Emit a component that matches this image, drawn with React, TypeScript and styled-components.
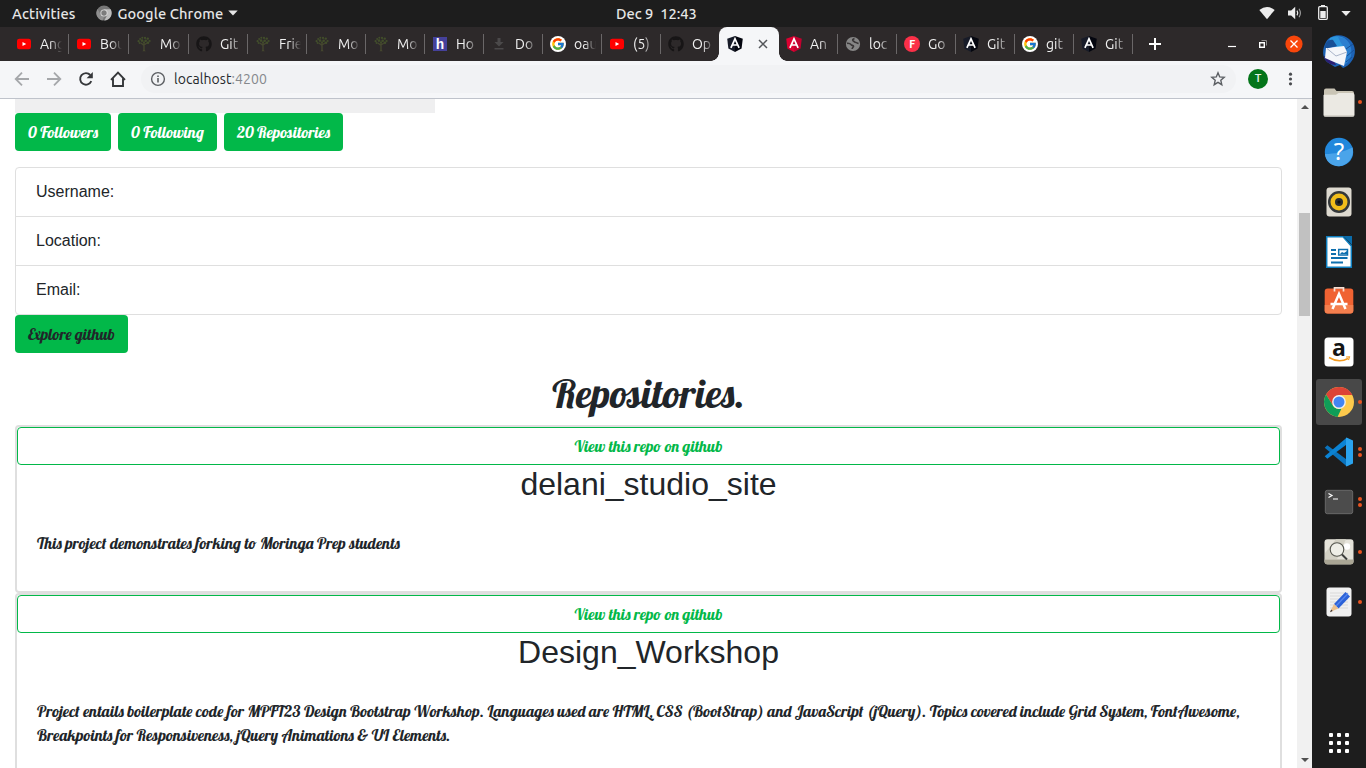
import React from "react";
import styled, { createGlobalStyle } from "styled-components";
import { FcGoogle } from "react-icons/fc";
import { FaGithub } from "react-icons/fa";

const GlobalStyle = createGlobalStyle`
  *, *::before, *::after { box-sizing: border-box; }
  html, body { margin: 0; padding: 0; overflow: hidden; background: #fff; }
  svg { display: block; flex: none; }
`;

const uiFont = `Ubuntu, "Noto Sans", "Open Sans", sans-serif`;
const bodyFont = `"Liberation Sans", Arial, sans-serif`;
const scriptFont = `Lobster, "Liberation Serif", serif`;

const Desktop = styled.div`
  width: 1366px;
  height: 768px;
  display: flex;
  flex-direction: column;
  overflow: hidden;
  font-family: ${uiFont};
`;

/* ---------- Top panel ---------- */

const Panel = styled.header`
  height: 27px;
  flex: none;
  background: #1d1d1d;
  color: #e6e6e6;
  display: grid;
  grid-template-columns: 604px auto 1fr;
  align-items: center;
  font-size: 14.67px;
  font-weight: 500;
  line-height: 25px;
  padding: 0 15px 1px 12px;
`;

const PanelGroup = styled.div`
  display: flex;
  align-items: center;
`;

const PanelStatus = styled(PanelGroup)`
  justify-content: flex-end;
`;

const PanelLabel = styled.span<{ $track?: number; $left?: number }>`
  white-space: pre;
  letter-spacing: ${(p) => p.$track ?? 0}px;
  margin-left: ${(p) => p.$left ?? 0}px;
`;

const Workspace = styled.div`
  flex: 1;
  min-height: 0;
  display: flex;
`;

const BrowserWindow = styled.div`
  width: 1312px;
  display: flex;
  flex-direction: column;
`;

/* ---------- Tabs ---------- */

const TabStrip = styled.div`
  height: 34px;
  flex: none;
  background: #2d292a;
  display: flex;
  align-items: center;
  padding-left: 9px;
`;

const Tab = styled.div<{ $line: boolean; $width: number }>`
  width: ${(p) => p.$width}px;
  height: 20px;
  flex: none;
  display: flex;
  align-items: center;
  padding-left: 7px;
  border-right: 1px solid ${(p) => (p.$line ? "#6a6768" : "transparent")};
`;

const TabTitle = styled.span`
  width: 22px;
  margin-left: 8px;
  overflow: hidden;
  white-space: nowrap;
  font-size: 14px;
  line-height: 20px;
  color: #f1f1f1;
  mask-image: linear-gradient(to right, #000 45%, transparent 100%);
`;

const ActiveTab = styled.div`
  position: relative;
  width: 60px;
  height: 34px;
  flex: none;
  display: flex;
  align-items: center;
  gap: 14px;
  padding-left: 8px;
  background: #f5f6f8;
  border-radius: 8px 8px 0 0;
  &::before,
  &::after {
    content: "";
    position: absolute;
    bottom: 0;
    width: 8px;
    height: 8px;
  }
  &::before {
    left: -8px;
    background: radial-gradient(circle at 0 0, transparent 7.5px, #f5f6f8 8px);
  }
  &::after {
    right: -8px;
    background: radial-gradient(circle at 100% 0, transparent 7.5px, #f5f6f8 8px);
  }
`;

const NewTab = styled.div`
  margin-left: 16px;
`;

const WindowControls = styled.div`
  margin-left: auto;
  margin-right: 9px;
  display: flex;
  align-items: center;
`;

/* ---------- Toolbar ---------- */

const Toolbar = styled.div`
  height: 38px;
  flex: none;
  display: flex;
  align-items: center;
  background: #f5f6f8;
  border-bottom: 1px solid #bfc3cb;
  padding: 0 0 1px 14px;
`;

const NavButtons = styled.div`
  display: flex;
  gap: 16px;
`;

const AddressBar = styled.div`
  width: 1095px;
  height: 28px;
  margin-left: 15px;
  padding: 0 10px 0 9px;
  border-radius: 14px;
  background: #f1f2f4;
  display: flex;
  align-items: center;
`;

const Url = styled.span`
  flex: 1;
  margin-left: 8px;
  font-size: 14px;
  line-height: 20px;
  color: #26282b;
  letter-spacing: 0.06px;
`;

const UrlPort = styled.span`
  color: #85888c;
`;

const Avatar = styled.div`
  width: 20px;
  height: 20px;
  margin-left: 12px;
  border-radius: 50%;
  background: #04751a;
  color: #e5f1e7;
  font: 500 11px/20px Roboto, sans-serif;
  text-align: center;
`;

/* ---------- Page ---------- */

const Viewport = styled.div`
  flex: 1;
  min-height: 0;
  display: flex;
  background: #fff;
`;

const Page = styled.main`
  flex: 1;
  overflow: hidden;
  padding: 0 15px;
  font: 16px/24px ${bodyFont};
  color: #212529;
`;

const ProfileImage = styled.div`
  width: 420px;
  height: 14px;
  background: #efeff0;
`;

const Script = styled.span<{ $size?: number }>`
  display: block;
  font-family: ${scriptFont};
  font-weight: 400;
  font-size: ${(p) => p.$size ?? 16}px;
`;

const StatRow = styled.div`
  display: flex;
  gap: 7px;
`;

const Button = styled.div<{ $width: number; $dark?: boolean }>`
  width: ${(p) => p.$width}px;
  height: 38px;
  display: flex;
  align-items: center;
  justify-content: center;
  border-radius: 4px;
  background: #02b849;
  color: ${(p) => (p.$dark ? "#212529" : "#fff")};
`;

const InfoList = styled.ul`
  list-style: none;
  margin: 16px 0 0;
  padding: 0;
  border: 1px solid #dfdfdf;
  border-radius: 4px;
`;

const InfoItem = styled.li`
  height: 49px;
  padding: 12px 20px;
  &:not(:last-child) {
    border-bottom: 1px solid #dfdfdf;
  }
  &:last-child {
    height: 48px;
  }
`;

const SectionTitle = styled.h1`
  margin: 16px 0 8px;
  height: 48px;
  line-height: 48px;
  text-align: center;
`;

const RepoCard = styled.section`
  border: 2px solid #dfdfdf;
  border-radius: 4px;
`;

const RepoLink = styled.div`
  height: 38px;
  display: flex;
  align-items: center;
  justify-content: center;
  border: 1px solid #02b849;
  border-radius: 4px;
  color: #02b849;
`;

const RepoName = styled.h2`
  margin: 0 0 8px;
  font-size: 32px;
  font-weight: 400;
  line-height: 38px;
  text-align: center;
`;

const RepoText = styled.p`
  margin: 0;
  padding: 20px 20px 36px;
`;

/* ---------- Scrollbar ---------- */

const Scrollbar = styled.div`
  width: 15px;
  background: #f1f1f1;
  display: flex;
  flex-direction: column;
  align-items: center;
  justify-content: space-between;
  padding: 6px 0;
`;

const Thumb = styled.div`
  width: 11px;
  height: 103px;
  margin-top: 104px;
  margin-bottom: auto;
  background: #c1c1c1;
`;

/* ---------- Dock ---------- */

const Dock = styled.aside`
  flex: 1;
  background: #1d1d1d;
  display: flex;
  flex-direction: column;
  align-items: center;
  gap: 4px;
  padding: 2px 0;
`;

const DockItem = styled.div<{ $active?: boolean }>`
  position: relative;
  width: 46px;
  height: 46px;
  border-radius: 3px;
  background: ${(p) => (p.$active ? "#484848" : "transparent")};
`;

const RunningDots = styled.div`
  position: absolute;
  right: 0;
  top: 0;
  height: 46px;
  display: flex;
  flex-direction: column;
  justify-content: center;
  gap: 2px;
`;

const Dot = styled.i`
  width: 4px;
  height: 4px;
  border-radius: 50%;
  background: #e95420;
`;

const AppGrid = styled.div`
  margin-top: auto;
  margin-bottom: 13px;
  display: grid;
  grid-template-columns: repeat(3, 4px);
  gap: 4px;
`;

const GridDot = styled.i`
  width: 4px;
  height: 4px;
  border-radius: 1px;
  background: #fff;
`;

/* ---------- Favicons ---------- */

const YouTube = () => (
  <svg width="16" height="16">
    <rect x="1" y="2.7" width="14" height="10.6" rx="2.4" fill="#f00" />
    <path d="M6.5 5.9 10.2 8 6.5 10.1Z" fill="#fff" />
  </svg>
);

const Tree = () => (
  <svg width="16" height="16">
    <path d="M8 15V6M8 9.500 5 7M8 9 11 7" stroke="#45472f" strokeWidth="1.400" fill="none" />
    <path d="M6.300 15.300h3.600L8 13.500Z" fill="#45472f" />
    <g fill="#424e2b">
      <circle cx="2.600" cy="5.200" r="1.100" />
      <circle cx="4.200" cy="3" r="1" />
      <circle cx="6.300" cy="1.700" r="1" />
      <circle cx="9" cy="1.900" r="1.100" />
      <circle cx="11.800" cy="2.600" r="1.200" />
      <circle cx="13.600" cy="5" r="1.100" />
      <circle cx="3.700" cy="7" r="1.100" />
      <circle cx="12" cy="6.700" r="1.300" />
      <circle cx="6" cy="4.600" r="1.300" />
      <circle cx="9.700" cy="4.700" r="1.300" />
      <circle cx="8" cy="6.300" r="1" />
    </g>
  </svg>
);

const GitHub = () => <FaGithub size={16} color="#171516" />;

const Hash = () => (
  <svg width="16" height="16">
    <rect x="1" y="1" width="14" height="14" fill="#45419a" />
    <text x="8" y="13.3" textAnchor="middle" fontFamily="Liberation Mono" fontWeight="700" fontSize="14" fill="#fff">
      h
    </text>
  </svg>
);

const Download = () => (
  <svg width="16" height="16" fill="#4b494a">
    <path d="M6.5 2h3v4h3L8 10.5 3.5 6h3ZM3.5 12h9v1.5h-9Z" />
  </svg>
);

const GoogleDisc = styled.span`
  width: 16px;
  height: 16px;
  flex: none;
  border-radius: 50%;
  background: #fff;
  display: flex;
  align-items: center;
  justify-content: center;
`;

const Google = () => (
  <GoogleDisc>
    <FcGoogle size={14} />
  </GoogleDisc>
);

const Angular = ({ left = "#171b28", right = "#04060f" }: { left?: string; right?: string }) => (
  <svg width="16" height="16">
    <path d="M8 0 .2 2.7 1.4 12.6 8 16Z" fill={left} />
    <path d="M8 0 15.8 2.7 14.6 12.6 8 16Z" fill={right} />
    <path d="M3.9 11.8 8 2.9 12.1 11.8M5.4 9h5.2" fill="none" stroke="#fff" strokeWidth="1.7" />
  </svg>
);

const AngularRed = () => <Angular left="#dd0031" right="#c3002f" />;

const Globe = () => (
  <svg width="16" height="16">
    <circle cx="8" cy="8" r="7.100" fill="#868686" />
    <path d="M2 7.300c2.500-.3 3.300.4 4.300 1.500.8.800 2.200.4 2.200 1.500 0 .9-1.300 1.200-1.300 2.700" fill="none" stroke="#393637" strokeWidth="1.700" />
    <path d="M9.500 2.500c-1.800.7-2.300 1.300-1.300 2.300 1 .8 1.600 1.700 2.800 1.700.9.100 1.200.9 2.600.8" fill="none" stroke="#393637" strokeWidth="1.700" />
  </svg>
);

const Freepik = () => (
  <svg width="16" height="16">
    <circle cx="8" cy="8" r="8" fill="#fb3048" />
    <text x="8.2" y="11.9" textAnchor="middle" fontFamily="Lato" fontWeight="900" fontSize="10.500" fill="#fff">
      F
    </text>
  </svg>
);

type TabData = { icon: React.FC; title: string; line?: boolean; width?: number };

const leftTabs: TabData[] = [
  { icon: YouTube, title: "Ang", width: 60 },
  { icon: YouTube, title: "Bou", width: 60 },
  { icon: Tree, title: "Mo", width: 60 },
  { icon: GitHub, title: "Git" },
  { icon: Tree, title: "Frie" },
  { icon: Tree, title: "Mo" },
  { icon: Tree, title: "Mo" },
  { icon: Hash, title: "Ho" },
  { icon: Download, title: "Do" },
  { icon: Google, title: "oau" },
  { icon: YouTube, title: "(5)" },
  { icon: GitHub, title: "Op", line: false, width: 58 },
];

const rightTabs: TabData[] = [
  { icon: AngularRed, title: "An" },
  { icon: Globe, title: "loc" },
  { icon: Freepik, title: "Go" },
  { icon: Angular, title: "Git" },
  { icon: Google, title: "git" },
  { icon: Angular, title: "Git" },
];

const TabList = ({ tabs }: { tabs: TabData[] }) => (
  <>
    {tabs.map(({ icon: Icon, title, line = true, width = 59 }, i) => (
      <Tab key={i} $line={line} $width={width}>
        <Icon />
        <TabTitle>{title}</TabTitle>
      </Tab>
    ))}
  </>
);

/* ---------- Panel icons ---------- */

const ChromeGray = () => (
  <svg width="16" height="16">
    <circle cx="8" cy="8" r="7.600" fill="#777" />
    <path d="M8 4.300h6.700A7.600 7.600 0 0 1 8.300 15.600L11.300 9.900Z" fill="#bdbdbd" />
    <path d="M1.500 4 4.800 9.800 8 11.700l-1.500 3.800A7.600 7.600 0 0 1 1.500 4Z" fill="#8f8f8f" />
    <circle cx="8" cy="8" r="3.600" fill="#dedede" />
    <circle cx="8" cy="8" r="2.700" fill="#7c7c7c" />
  </svg>
);

const StatusIcons = () => (
  <svg width="92" height="26" viewBox="1259 0 92 26" fill="#ececec">
    <path d="M1259.300 10Q1267 4.200 1274.700 10L1267 19.200Z" />
    <path d="M1288 10.500h3.200l4-3.700v12.400l-4-3.700h-3.200Z" />
    <path d="M1297 10.600q1.500 2.400 0 4.800" fill="none" stroke="#ececec" strokeWidth="1.200" />
    <path d="M1299 8.700q2.800 4.300 0 8.600" fill="none" stroke="#a5a5a5" strokeWidth="1.100" />
    <path d="M1321 5h4v1.500h-4Z" />
    <rect x="1318.700" y="6.700" width="8.600" height="12.600" rx="1" fill="none" stroke="#ececec" strokeWidth="1.300" />
    <path d="M1320.300 11h5.400v7h-5.400Z" />
    <path d="M1341.300 11h9.400l-4.700 5Z" />
  </svg>
);

/* ---------- Browser icons ---------- */

const BackIcon = ({ flip }: { flip?: boolean }) => (
  <svg width="16" height="16" fill="none" stroke="#a5a7aa" strokeWidth="1.800">
    <path d={flip ? "M1 8h13M8 1.700 14.300 8 8 14.300" : "M15 8H2M8 1.700 1.700 8 8 14.300"} />
  </svg>
);

const ReloadIcon = () => (
  <svg width="16" height="16">
    <path d="M13.300 10.200A5.800 5.800 0 1 1 12.300 4" fill="none" stroke="#35373a" strokeWidth="1.900" />
    <path d="M14.800 1v6.200H8.600Z" fill="#35373a" />
  </svg>
);

const HomeIcon = () => (
  <svg width="16" height="16">
    <path d="M1 8.800 8 1.600 15 8.800M3 7.500v7.500h10V7.500" fill="none" stroke="#35373a" strokeWidth="1.900" />
  </svg>
);

const InfoIcon = () => (
  <svg width="16" height="16">
    <circle cx="8" cy="8" r="6.400" fill="none" stroke="#5b5e62" strokeWidth="1.400" />
    <path d="M8 7v4.500M8 4.400v1.600" stroke="#5b5e62" strokeWidth="1.600" />
  </svg>
);

const StarIcon = () => (
  <svg width="16" height="16">
    <path
      d="m8 1.800 1.700 4.100 4.500.4-3.400 3 1 4.400L8 11.400l-3.800 2.300 1-4.400-3.400-3 4.500-.4Z"
      fill="none"
      stroke="#5b5e62"
      strokeWidth="1.400"
    />
  </svg>
);

const MenuGap = styled.div`
  margin-left: 18px;
`;

const MenuIcon = () => (
  <svg width="9" height="16" fill="#4a4c50">
    <circle cx="4.500" cy="3.200" r="1.600" />
    <circle cx="4.500" cy="8" r="1.600" />
    <circle cx="4.500" cy="12.800" r="1.600" />
  </svg>
);

const ControlsIcon = () => (
  <svg width="76" height="20" viewBox="1227 34 76 20" fill="none" stroke="#fff">
    <path d="M1228 46.500h8" strokeWidth="1.200" />
    <path d="M1259.700 42.700h4.600v4.600h-4.600Z" strokeWidth="1.400" />
    <path d="M1261.500 40.500h5v5" stroke="#8d8b8b" />
    <circle cx="1294" cy="44" r="8.600" fill="#f9460b" stroke="none" />
    <path d="m1290.500 40.500 7 7m0-7-7 7" strokeWidth="1.300" />
  </svg>
);

/* ---------- Dock icons ---------- */

const Svg46 = ({ children }: { children: React.ReactNode }) => (
  <svg width="46" height="46" viewBox="0 0 46 46">
    {children}
  </svg>
);

const Thunderbird = () => (
  <Svg46>
    <path d="M10 13C14 5 27 4 33 10c7 5 8 16 2 23-2 3-5 5-8 6l-3-3-5 2-8-5C6 28 6 20 10 13Z" fill="#1c62b5" />
    <path d="M14 9c7-4 16-1 18 5l-3 7-17-6Z" fill="#2d96dd" />
    <path d="M22 8c10 0 15 9 13 19-1 4-4 8-7 9 2-7 3-16-3-22Z" fill="#2b7fd0" />
    <path d="M8 27c1 6 6 9 12 9l-3-6Z" fill="#2b1f73" />
    <path d="m10 19 18-2 3 6-3 14-10-4-9-4Z" fill="#f4f6fa" />
    <path d="m11 19.500 9 7.500 11-4" fill="none" stroke="#a9b4c9" strokeWidth="1" />
    <path d="M9 19c0-6 4-9 8-8l4 6-9 2Z" fill="#174f96" />
    <path d="m30 20 7-5M31 27l7-6M30 33l6-5" stroke="#174f96" strokeWidth="1" />
  </Svg46>
);

const Files = () => (
  <Svg46>
    <path d="M8 11.500q0-2 2-2h8.500l2 2.500H36q2 0 2 2V20H8Z" fill="#c9c4b5" />
    <path d="M8 15.800h12l2.500-1.800H36.500q2 0 2 2v20q0 1.700-2 1.700h-27q-2 0-2-1.700V16Z" fill="#ebe9e3" />
    <path d="M8 37h30" stroke="#b8b4a9" strokeWidth=".8" />
  </Svg46>
);

const Help = () => (
  <Svg46>
    <circle cx="23" cy="23" r="14.200" fill="#2288dc" />
    <path d="M9 25c10 0 18-2 27.500-6.500C39 28 31 37.200 23 37.200 15 37.200 9.500 32 9 25Z" fill="#4aa4ea" />
    <text x="23" y="31.300" textAnchor="middle" fontFamily="Noto Sans" fontSize="24" fill="#fff">
      ?
    </text>
  </Svg46>
);

const Rhythmbox = () => (
  <Svg46>
    <rect x="10.500" y="8.500" width="25" height="29" rx="3" fill="#dedad0" />
    <circle cx="23" cy="23" r="11" fill="#34383a" />
    <circle cx="23" cy="23" r="8.500" fill="#f1bd1a" />
    <circle cx="23" cy="23" r="4" fill="#292d30" />
    <circle cx="23" cy="23" r="1.600" fill="#0d0f10" />
  </Svg46>
);

const Writer = () => (
  <Svg46>
    <path d="M10.700 7.700H27L35.300 17v21.300H10.700Z" fill="#fff" stroke="#0e7fc0" strokeWidth="1.500" />
    <path d="M27.500 7H36v9Z" fill="#0a6cab" />
    <path d="M15 21h5M15 25h5M15 29h16.500M15 33.500h12" stroke="#0e6fae" strokeWidth="2" />
    <rect x="22.700" y="20.500" width="8.800" height="5.500" fill="#fff" stroke="#0e6fae" strokeWidth="1.500" />
    <path d="m24 25 2-2 2 1 3-2v3Z" fill="#0e6fae" />
  </Svg46>
);

const Software = () => (
  <Svg46>
    <rect x="8.700" y="9.500" width="28.600" height="25" rx="3" fill="#f06232" />
    <path d="M8.700 26h28.600v5.500q0 3-3 3H11.700q-3 0-3-3Z" fill="#f47f4e" />
    <path d="M18.500 12.500V8.800h9v3.700" fill="none" stroke="#f8ded2" strokeWidth="1.700" />
    <path d="m16.500 30 6.500-15 6.500 15M14.500 25h17" fill="none" stroke="#fff" strokeWidth="2.500" />
  </Svg46>
);

const Amazon = () => (
  <Svg46>
    <rect x="8.500" y="8.500" width="29" height="29" rx="3.500" fill="#fff" />
    <text x="23" y="27" textAnchor="middle" fontFamily="Open Sans" fontWeight="700" fontSize="23" fill="#151515">
      a
    </text>
    <path d="M13 28.500q10 6 19 1" fill="none" stroke="#f39a1f" strokeWidth="1.500" />
    <path d="m30 28 3.500-.2-1 3.200" fill="none" stroke="#f39a1f" strokeWidth="1.100" />
  </Svg46>
);

const Chrome = () => (
  <Svg46>
    <circle cx="23" cy="23" r="15" fill="#fdc94c" />
    <path d="M10 15.500A15 15 0 0 1 36.300 16H23L17 26.500Z" fill="#dc4437" />
    <path d="M10 15.500 16.900 26.500A7 7 0 0 0 25.500 29.500L21.500 37.900A15 15 0 0 1 10 15.500Z" fill="#0f9d58" />
    <circle cx="23" cy="23" r="6.900" fill="#f1f1f1" />
    <circle cx="23" cy="23" r="5.500" fill="#4285f4" />
  </Svg46>
);

const VSCode = () => (
  <Svg46>
    <path d="M8.700 18.800 11.300 16.300 32 31.500V37L30 36.700Z" fill="#0a73bd" />
    <path d="M8.700 27.200 11.300 29.700 32 14.500V9L30 9.300Z" fill="#0b83d4" />
    <path d="M30.500 8.600 37 11.600V34.400L30.500 37.400Q29.500 36.800 30 36V10Q29.500 9 30.500 8.600Z" fill="#2aa3ee" />
  </Svg46>
);

const Terminal = () => (
  <Svg46>
    <rect x="9.300" y="11.300" width="27.400" height="23.400" rx="2" fill="#4c4c4c" stroke="#747474" strokeWidth=".8" />
    <path d="m12.500 14.500 3.500 2-3.500 2M17 20h5" fill="none" stroke="#fff" strokeWidth="1.200" />
  </Svg46>
);

const ImageViewer = () => (
  <Svg46>
    <rect x="8.500" y="10.300" width="29" height="25" rx="3" fill="#e5e3da" />
    <path d="m20 10.300 10 0-9 20H9V24Z" fill="#d2d0c4" />
    <path d="M8.500 30.500h29v2q0 3-3 3h-23q-3 0-3-3Z" fill="#aaa695" />
    <circle cx="31" cy="17.500" r="3.200" fill="#fff" />
    <circle cx="21" cy="20.500" r="6.800" fill="#f5f5f0" fillOpacity=".8" stroke="#55564f" strokeWidth="1.100" />
    <path d="m26 25.500 5 5" stroke="#3d3e3c" strokeWidth="2" />
  </Svg46>
);

const TextEditor = () => (
  <Svg46>
    <rect x="10.500" y="8.500" width="25" height="29" rx="3" fill="#f1f1f1" />
    <path d="M14 14h18M14 17h18M14 20h18M14 23h18M14 26h18M14 29h18" stroke="#d4d4d4" strokeWidth=".8" />
    <path d="m18 25 11.500-12 4.500 4.500L22.500 29.500Z" fill="#2c62d8" />
    <path d="m20 27 12-12.500" stroke="#5586ee" strokeWidth="1.300" />
    <path d="m18 25 4.500 4.500-8.500 3.500Z" fill="#ecc08c" />
    <path d="m15.200 30.500 1.500 1.500-2.700 1.200Z" fill="#3a3233" />
  </Svg46>
);

const dockApps: { icon: React.FC; dots: number; active?: boolean }[] = [
  { icon: Thunderbird, dots: 0 },
  { icon: Files, dots: 1 },
  { icon: Help, dots: 0 },
  { icon: Rhythmbox, dots: 0 },
  { icon: Writer, dots: 0 },
  { icon: Software, dots: 0 },
  { icon: Amazon, dots: 0 },
  { icon: Chrome, dots: 1, active: true },
  { icon: VSCode, dots: 2 },
  { icon: Terminal, dots: 2 },
  { icon: ImageViewer, dots: 1 },
  { icon: TextEditor, dots: 1 },
];

const repos = [
  {
    name: "delani_studio_site",
    text: "This project demonstrates forking to Moringa Prep students",
  },
  {
    name: "Design_Workshop",
    text: "Project entails boilerplate code for MPFT23 Design Bootstrap Workshop. Languages used are HTML, CSS (BootStrap) and JavaScript (jQuery). Topics covered include Grid System, FontAwesome, Breakpoints for Responsiveness, jQuery Animations & UI Elements.",
  },
];

export default function App() {
  return (
    <Desktop>
      <GlobalStyle />
      <Panel>
        <PanelGroup>
          <PanelLabel $track={0.12}>Activities</PanelLabel>
          <PanelLabel $left={20}>
            <ChromeGray />
          </PanelLabel>
          <PanelLabel $left={6} $track={0.1}>
            Google Chrome
          </PanelLabel>
          <PanelLabel $left={5}>
            <svg width="10" height="6" fill="#e6e6e6">
              <path d="M.3.500h9.400L5 5.500Z" />
            </svg>
          </PanelLabel>
        </PanelGroup>
        <PanelLabel>{"Dec 9  12:43"}</PanelLabel>
        <PanelStatus>
          <StatusIcons />
        </PanelStatus>
      </Panel>
      <Workspace>
        <BrowserWindow>
          <TabStrip>
            <TabList tabs={leftTabs} />
            <ActiveTab>
              <Angular />
              <svg width="12" height="12" stroke="#54565a" strokeWidth="1.500">
                <path d="m2 2 8 8M10 2 2 10" />
              </svg>
            </ActiveTab>
            <TabList tabs={rightTabs} />
            <NewTab>
              <svg width="12" height="12" stroke="#fff" strokeWidth="2">
                <path d="M6 0v12M0 6h12" />
              </svg>
            </NewTab>
            <WindowControls>
              <ControlsIcon />
            </WindowControls>
          </TabStrip>
          <Toolbar>
            <NavButtons>
              <BackIcon />
              <BackIcon flip />
              <ReloadIcon />
              <HomeIcon />
            </NavButtons>
            <AddressBar>
              <InfoIcon />
              <Url>
                localhost<UrlPort>:4200</UrlPort>
              </Url>
              <StarIcon />
            </AddressBar>
            <Avatar>T</Avatar>
            <MenuGap>
              <MenuIcon />
            </MenuGap>
          </Toolbar>
          <Viewport>
            <Page>
              <ProfileImage />
              <StatRow>
                <Button $width={96}>
                  <Script>0 Followers</Script>
                </Button>
                <Button $width={99}>
                  <Script>0 Following</Script>
                </Button>
                <Button $width={119}>
                  <Script>20 Repositories</Script>
                </Button>
              </StatRow>
              <InfoList>
                <InfoItem>Username:</InfoItem>
                <InfoItem>Location:</InfoItem>
                <InfoItem>Email:</InfoItem>
              </InfoList>
              <Button $width={113} $dark>
                <Script>Explore github</Script>
              </Button>
              <SectionTitle>
                <Script $size={40}>Repositories.</Script>
              </SectionTitle>
              {repos.map((repo) => (
                <RepoCard key={repo.name}>
                  <RepoLink>
                    <Script>View this repo on github</Script>
                  </RepoLink>
                  <RepoName>{repo.name}</RepoName>
                  <RepoText>
                    <Script>{repo.text}</Script>
                  </RepoText>
                </RepoCard>
              ))}
            </Page>
            <Scrollbar>
              <svg width="8" height="4" fill="#505050">
                <path d="M4 0 8 4H0Z" />
              </svg>
              <Thumb />
              <svg width="8" height="4" fill="#505050">
                <path d="M0 0h8L4 4Z" />
              </svg>
            </Scrollbar>
          </Viewport>
        </BrowserWindow>
        <Dock>
          {dockApps.map(({ icon: Icon, dots, active }, i) => (
            <DockItem key={i} $active={active}>
              <Icon />
              <RunningDots>
                {Array.from({ length: dots }, (_, d) => (
                  <Dot key={d} />
                ))}
              </RunningDots>
            </DockItem>
          ))}
          <AppGrid>
            {Array.from({ length: 9 }, (_, d) => (
              <GridDot key={d} />
            ))}
          </AppGrid>
        </Dock>
      </Workspace>
    </Desktop>
  );
}
